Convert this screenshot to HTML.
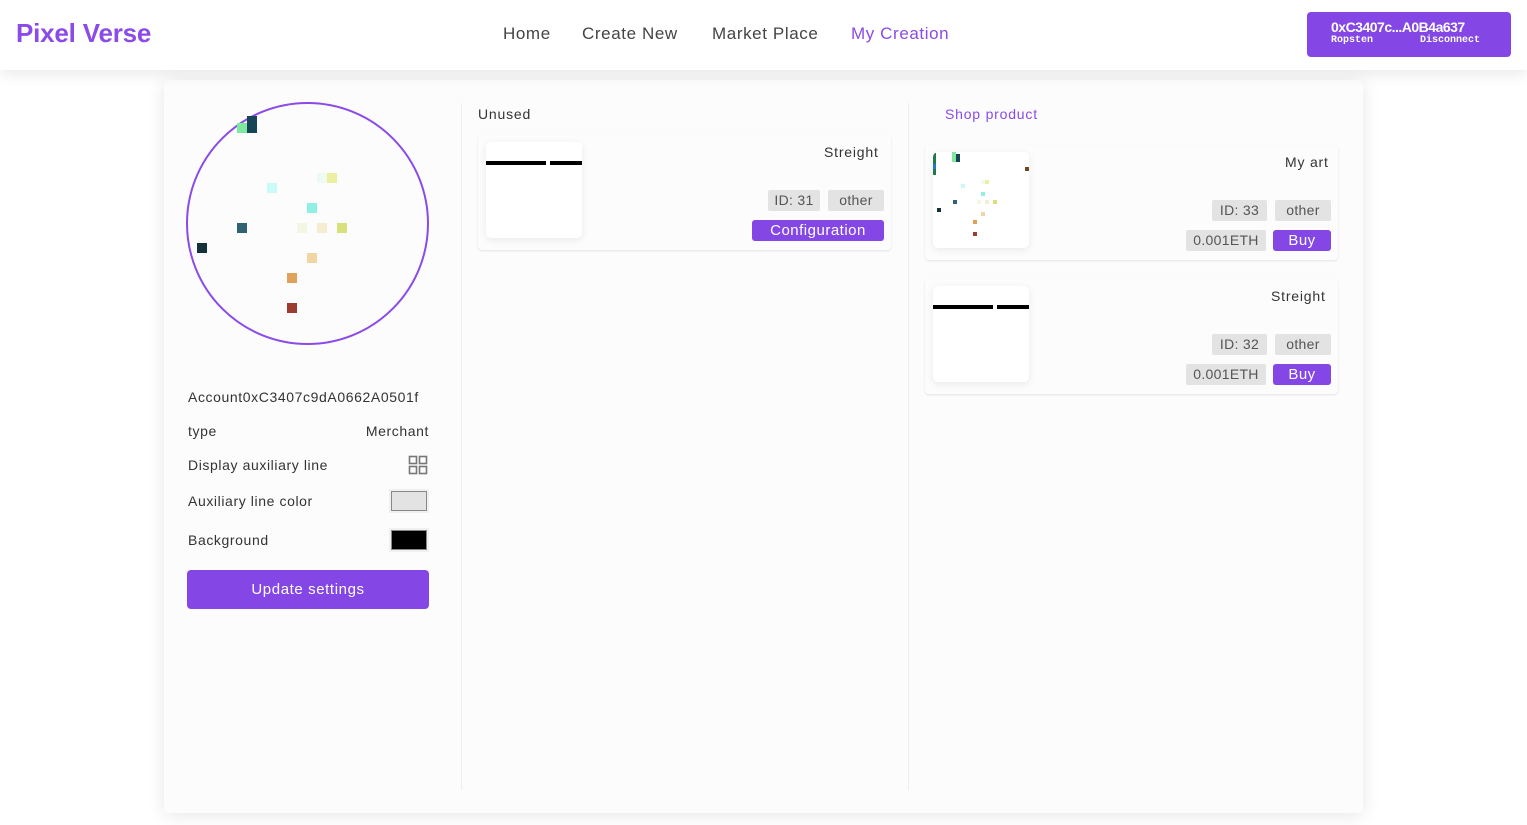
<!DOCTYPE html>
<html><head><meta charset="utf-8"><style>
*{box-sizing:border-box;margin:0;padding:0}
body{width:1527px;height:825px;background:#fff;font-family:"Liberation Sans",sans-serif;color:#333;position:relative;overflow:hidden}
.hdr{position:absolute;left:0;top:0;width:1527px;height:70px;background:#fff;box-shadow:0 4px 14px rgba(0,0,0,.09);z-index:2}
.logo{position:absolute;left:16px;top:18px;font-size:26px;font-weight:bold;color:#8a4be8;letter-spacing:-0.2px}
.nav{position:absolute;top:24px;font-size:17px;color:#444;letter-spacing:.6px}
.wal{position:absolute;left:1307px;top:12px;width:204px;height:45px;background:#8446e4;border-radius:4px;color:#fff}
.wal b{position:absolute;left:24px;top:7px;font-size:14px;letter-spacing:-0.5px}
.wal i{position:absolute;top:23px;font-style:normal;font-family:"Liberation Mono",monospace;font-size:10px;font-weight:bold}
.panel{position:absolute;left:164px;top:80px;width:1199px;height:733px;background:#fcfcfc;border-radius:5px;box-shadow:0 2px 18px rgba(0,0,0,.1)}
.ab{position:absolute}
.circ{position:absolute;left:186px;top:102px;width:243px;height:243px;border:2px solid #8a4be8;border-radius:50%}
.px{position:absolute;width:10px;height:10px}
.row{position:absolute;left:188px;width:241px;font-size:14px;color:#333;letter-spacing:.6px}
.vl{position:absolute;width:1px;background:#eee;top:103px;height:687px}
.card{position:absolute;width:413px;height:115px;border-radius:4px;box-shadow:0 1px 2px rgba(0,0,0,.1);background:#fcfcfc}
.th{position:absolute;width:96px;height:96px;background:#fff;border-radius:5px;box-shadow:0 2px 8px rgba(0,0,0,.08);overflow:hidden}
.tag{position:absolute;height:21px;background:#e3e3e3;font-size:14px;color:#555;text-align:center;line-height:21px;border-radius:2px;letter-spacing:.3px}
.btn{position:absolute;height:21px;background:#8446e4;color:#fff;font-size:15px;text-align:center;line-height:21px;border-radius:3px;letter-spacing:.5px}
.nm{position:absolute;font-size:14px;color:#333;letter-spacing:.8px}
</style></head><body>
<div class="hdr">
<div class="logo">Pixel Verse</div>
<div class="nav" style="left:503px">Home</div>
<div class="nav" style="left:582px">Create New</div>
<div class="nav" style="left:712px">Market Place</div>
<div class="nav" style="left:851px;color:#8a4be8">My Creation</div>
<div class="wal"><b>0xC3407c...A0B4a637</b><i style="left:24px">Ropsten</i><i style="left:113px">Disconnect</i></div>
</div>
<div class="panel"></div>
<div class="circ"></div>
<div class="px" style="left:237px;top:123px;background:#7de8a0"></div>
<div class="px" style="left:247px;top:116px;height:17px;background:#164556"></div>
<div class="px" style="left:267px;top:183px;background:#c8fbf7"></div>
<div class="px" style="left:317px;top:173px;background:#eefbf3"></div>
<div class="px" style="left:327px;top:173px;background:#ebf0a0"></div>
<div class="px" style="left:307px;top:203px;background:#8ff0e8"></div>
<div class="px" style="left:237px;top:223px;background:#2f6373"></div>
<div class="px" style="left:297px;top:223px;background:#f3f6e5"></div>
<div class="px" style="left:317px;top:223px;background:#f6ecd0"></div>
<div class="px" style="left:337px;top:223px;background:#d8e07c"></div>
<div class="px" style="left:197px;top:243px;background:#15323c"></div>
<div class="px" style="left:307px;top:253px;background:#f2d5a3"></div>
<div class="px" style="left:287px;top:273px;background:#e0a25a"></div>
<div class="px" style="left:287px;top:303px;background:#9e3b30"></div>

<div class="row" style="top:389px;overflow:hidden;white-space:nowrap">Account0xC3407c9dA0662A0501f</div>
<div class="row" style="top:423px">type<span style="float:right">Merchant</span></div>
<div class="row" style="top:457px">Display auxiliary line</div>
<svg class="ab" style="left:408px;top:455px" width="20" height="20" viewBox="0 0 20 20" fill="none" stroke="#777" stroke-width="1.6"><rect x="1.5" y="1.5" width="7" height="7"/><rect x="11.5" y="1.5" width="7" height="7"/><rect x="1.5" y="11.5" width="7" height="7"/><rect x="11.5" y="11.5" width="7" height="7"/></svg>
<div class="row" style="top:493px">Auxiliary line color</div>
<div class="ab" style="left:389px;top:489px;width:40px;height:24px;background:#f0f0f0;padding:2px"><div style="width:36px;height:20px;background:#e3e3e3;border:1px solid #888"></div></div>
<div class="row" style="top:532px">Background</div>
<div class="ab" style="left:389px;top:528px;width:40px;height:24px;background:#f0f0f0;padding:2px"><div style="width:36px;height:20px;background:#000;border:1px solid #888"></div></div>
<div class="ab" style="left:187px;top:570px;width:242px;height:39px;background:#8446e4;border-radius:4px;color:#fff;font-size:15px;text-align:center;line-height:39px;letter-spacing:.6px">Update settings</div>

<div class="vl" style="left:461px"></div>
<div class="vl" style="left:908px"></div>

<div class="nm" style="left:478px;top:106px">Unused</div>
<div class="card" style="left:478px;top:135px"></div>
<div class="th" style="left:486px;top:142px"><div class="ab" style="left:0;top:19px;width:60px;height:4px;background:#000"></div><div class="ab" style="left:64px;top:19px;width:32px;height:4px;background:#000"></div></div>
<div class="nm" style="left:824px;top:144px">Streight</div>
<div class="tag" style="left:768px;top:190px;width:52px">ID: 31</div>
<div class="tag" style="left:828px;top:190px;width:56px">other</div>
<div class="btn" style="left:752px;top:220px;width:132px">Configuration</div>

<div class="nm" style="left:945px;top:106px;color:#8a4be8">Shop product</div>
<div class="card" style="left:925px;top:145px"></div>
<div class="th" style="left:933px;top:152px">
<div class="ab" style="left:0;top:1px;width:3px;height:22px;background:#1e7a4a"></div>
<div class="ab" style="left:0;top:12px;width:3px;height:5px;background:#2277cc"></div>
<div class="ab" style="left:19px;top:0;width:4px;height:10px;background:#7de8a0"></div>
<div class="ab" style="left:23px;top:2px;width:4px;height:8px;background:#164556"></div>
<div class="ab" style="left:92px;top:15px;width:4px;height:4px;background:#6a4a20"></div>
<div class="ab" style="left:28px;top:32px;width:4px;height:4px;background:#c8fbf7"></div>
<div class="ab" style="left:48px;top:28px;width:4px;height:4px;background:#eefbf3"></div>
<div class="ab" style="left:52px;top:28px;width:4px;height:4px;background:#ebf0a0"></div>
<div class="ab" style="left:48px;top:40px;width:4px;height:4px;background:#8ff0e8"></div>
<div class="ab" style="left:20px;top:48px;width:4px;height:4px;background:#2f6373"></div>
<div class="ab" style="left:44px;top:48px;width:4px;height:4px;background:#f3f6e5"></div>
<div class="ab" style="left:52px;top:48px;width:4px;height:4px;background:#f6ecd0"></div>
<div class="ab" style="left:60px;top:48px;width:4px;height:4px;background:#d8e07c"></div>
<div class="ab" style="left:4px;top:56px;width:4px;height:4px;background:#15323c"></div>
<div class="ab" style="left:48px;top:60px;width:4px;height:4px;background:#f2d5a3"></div>
<div class="ab" style="left:40px;top:68px;width:4px;height:4px;background:#e0a25a"></div>
<div class="ab" style="left:40px;top:80px;width:4px;height:4px;background:#9e3b30"></div>
</div>
<div class="nm" style="left:1285px;top:154px">My art</div>
<div class="tag" style="left:1212px;top:200px;width:55px">ID: 33</div>
<div class="tag" style="left:1275px;top:200px;width:56px">other</div>
<div class="tag" style="left:1186px;top:230px;width:80px">0.001ETH</div>
<div class="btn" style="left:1273px;top:230px;width:58px">Buy</div>

<div class="card" style="left:925px;top:279px"></div>
<div class="th" style="left:933px;top:286px"><div class="ab" style="left:0;top:19px;width:60px;height:4px;background:#000"></div><div class="ab" style="left:64px;top:19px;width:32px;height:4px;background:#000"></div></div>
<div class="nm" style="left:1271px;top:288px">Streight</div>
<div class="tag" style="left:1212px;top:334px;width:55px">ID: 32</div>
<div class="tag" style="left:1275px;top:334px;width:56px">other</div>
<div class="tag" style="left:1186px;top:364px;width:80px">0.001ETH</div>
<div class="btn" style="left:1273px;top:364px;width:58px">Buy</div>
</body></html>
